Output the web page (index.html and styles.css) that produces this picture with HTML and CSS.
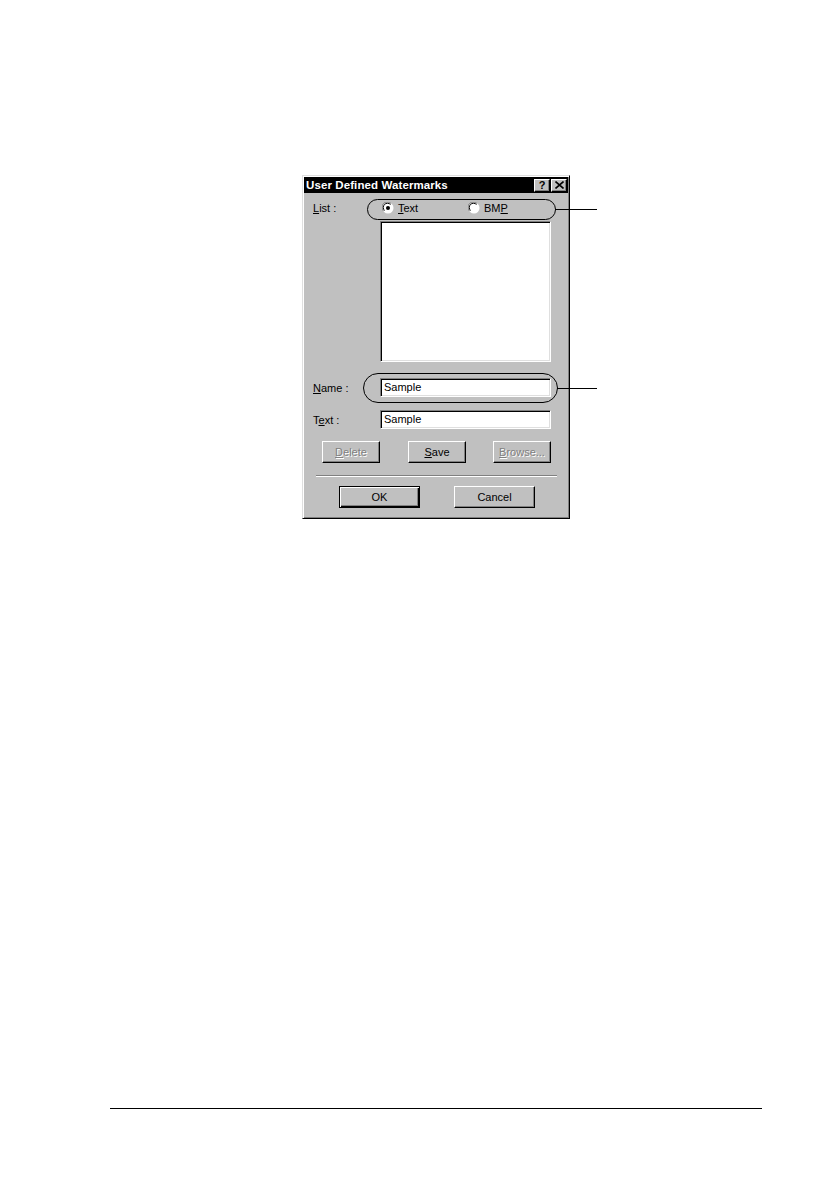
FILE: index.html
```html
<!DOCTYPE html>
<html>
<head>
<meta charset="utf-8">
<link rel="stylesheet" href="styles.css">
</head>
<body>
<div class="page">
  <div class="dialog">
    <div class="titlebar">
      <span class="title">User Defined Watermarks</span>
      <div class="tbtns">
        <span class="tbtn">?</span>
        <span class="tbtn"><svg width="9" height="8" viewBox="0 0 9 8"><path d="M0.5 0.5 L8.5 7.5 M8.5 0.5 L0.5 7.5" stroke="#000" stroke-width="1.6"/></svg></span>
      </div>
    </div>
    <div class="body">
      <div class="row row-list">
        <span class="label"><u>L</u>ist :</span>
        <div class="radios">
          <span class="radio radio-text"><svg class="rdot" width="12" height="12" viewBox="0 0 12 12"><circle cx="6" cy="6" r="5.5" fill="#fff"/><path d="M1.5 9 A5 5 0 0 1 9 1.5" fill="none" stroke="#808080" stroke-width="1"/><path d="M2.5 8.5 A4 4 0 0 1 8.5 2.5" fill="none" stroke="#000" stroke-width="1"/><circle cx="6" cy="6" r="2" fill="#000"/></svg><span><u>T</u>ext</span></span>
          <span class="radio radio-bmp"><svg class="rdot" width="12" height="12" viewBox="0 0 12 12"><circle cx="6" cy="6" r="5.5" fill="#fff"/><path d="M1.5 9 A5 5 0 0 1 9 1.5" fill="none" stroke="#808080" stroke-width="1"/><path d="M2.5 8.5 A4 4 0 0 1 8.5 2.5" fill="none" stroke="#000" stroke-width="1"/></svg><span>BM<u>P</u></span></span>
        </div>
      </div>
      <div class="row row-box">
        <span></span>
        <div class="listbox"></div>
      </div>
      <div class="row row-name">
        <span class="label"><u>N</u>ame :</span>
        <div class="field">Sample</div>
      </div>
      <div class="row row-text">
        <span class="label">T<u>e</u>xt :</span>
        <div class="field">Sample</div>
      </div>
      <div class="btnrow">
        <span class="btn disabled btn-delete"><u>D</u>elete</span>
        <span class="btn btn-save"><u>S</u>ave</span>
        <span class="btn disabled btn-browse"><u>B</u>rowse...</span>
      </div>
      <div class="sep"></div>
      <div class="okrow">
        <span class="btn btn-ok">OK</span>
        <span class="btn btn-cancel">Cancel</span>
      </div>
    </div>
    <div class="capsule cap-list"></div>
    <div class="callout line-list"></div>
    <div class="capsule cap-name"></div>
    <div class="callout line-name"></div>
  </div>
  <div class="footer-rule"></div>
</div>
</body>
</html>
```

FILE: styles.css
```css
html, body {
  margin: 0;
  padding: 0;
  background: #fff;
}
.page {
  padding-top: 175px;
  height: 1190px;
  box-sizing: border-box;
  font-family: "Liberation Sans", Arial, sans-serif;
  font-size: 11px;
  color: #000;
}
.dialog {
  position: relative;
  margin-left: 302px;
  width: 268px;
  height: 344px;
  box-sizing: border-box;
  background: #c0c0c0;
  border: 1px solid;
  border-color: #dfdfdf #000 #000 #dfdfdf;
  box-shadow: inset 1px 1px #fff, inset -1px -1px #808080;
  padding: 1px;
}
.titlebar {
  height: 16px;
  background: #000;
  display: flex;
  align-items: center;
  justify-content: space-between;
}
.title {
  color: #fff;
  font-weight: bold;
  font-size: 11.5px;
  padding-left: 2px;
  letter-spacing: 0.1px;
}
.tbtns {
  display: flex;
  gap: 1px;
  margin-right: 1px;
}
.tbtn {
  width: 16px;
  height: 13px;
  box-sizing: border-box;
  background: #c0c0c0;
  border: 1px solid;
  border-color: #fff #000 #000 #fff;
  box-shadow: inset -1px -1px #808080;
  display: flex;
  align-items: center;
  justify-content: center;
  font-weight: bold;
  font-size: 11px;
  line-height: 1;
}
.body {
  padding-left: 9px;
}
.row {
  display: grid;
  grid-template-columns: 67px 171px;
  align-items: center;
}
.label u, .radio u, .btn u {
  text-decoration: underline;
}
.row-list {
  margin-top: 6px;
  height: 18px;
}
.radios {
  display: flex;
  align-items: center;
  height: 18px;
}
.radio {
  display: flex;
  align-items: center;
  gap: 4px;
}
.radio-text {
  margin-left: 2px;
  width: 86px;
}
.row-box {
  margin-top: 4px;
}
.listbox {
  height: 141px;
  box-sizing: border-box;
  background: #fff;
  border: 1px solid;
  border-color: #808080 #fff #fff #808080;
  box-shadow: inset 1px 1px #000, inset -1px -1px #dfdfdf;
}
.row-name {
  margin-top: 16px;
}
.row-text {
  margin-top: 13px;
}
.field {
  height: 19px;
  box-sizing: border-box;
  background: #fff;
  border: 1px solid;
  border-color: #808080 #fff #fff #808080;
  box-shadow: inset 1px 1px #000, inset -1px -1px #dfdfdf;
  padding-left: 3px;
  line-height: 17px;
}
.btnrow {
  margin-top: 12px;
  margin-left: 9px;
  display: flex;
}
.btn {
  width: 58px;
  height: 22px;
  box-sizing: border-box;
  background: #c0c0c0;
  border: 1px solid;
  border-color: #fff #000 #000 #fff;
  box-shadow: inset -1px -1px #808080;
  display: flex;
  align-items: center;
  justify-content: center;
}
.btn.disabled {
  color: #808080;
  text-shadow: 1px 1px #fff;
}
.btn-save {
  margin-left: 28px;
}
.btn-browse {
  margin-left: 27px;
}
.sep {
  margin-top: 12px;
  margin-left: 3px;
  width: 241px;
  height: 1px;
  background: #808080;
  border-bottom: 1px solid #fff;
}
.okrow {
  margin-top: 9px;
  margin-left: 26px;
  display: flex;
}
.btn-ok, .btn-cancel {
  width: 81px;
}
.btn-ok {
  border: 1px solid #000;
  box-shadow: inset 1px 1px #fff, inset -1px -1px #000, inset -2px -2px #808080;
}
.btn-cancel {
  margin-left: 34px;
}
.capsule {
  position: absolute;
  box-sizing: border-box;
  border: 1.5px solid #000;
}
.cap-list {
  left: 64px;
  top: 23px;
  width: 189px;
  height: 21px;
  border-radius: 11px;
}
.cap-name {
  left: 60px;
  top: 197px;
  width: 195px;
  height: 30px;
  border-radius: 15px;
}
.callout {
  position: absolute;
  height: 1.5px;
  background: #000;
}
.line-list {
  left: 252px;
  top: 32.5px;
  width: 42px;
}
.line-name {
  left: 254px;
  top: 211.5px;
  width: 40px;
}
.footer-rule {
  margin-top: 589px;
  margin-left: 110px;
  width: 652px;
  height: 1px;
  background: #000;
}
```
